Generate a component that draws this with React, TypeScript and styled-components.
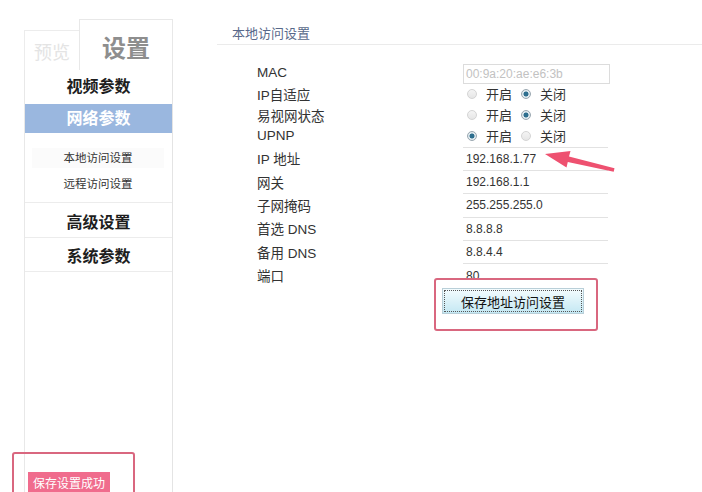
import React from "react";
import styled, { createGlobalStyle } from "styled-components";

const Global = createGlobalStyle`
  html, body { margin: 0; padding: 0; background: #fff; overflow: hidden; }
  body { font-family: "Liberation Sans", "Noto Sans CJK SC", sans-serif; color: #333; }
  * { box-sizing: border-box; }
`;

const CJK = `"Liberation Sans", "Noto Sans CJK SC", sans-serif`;

const Page = styled.div`
  position: relative;
  display: flex;
  height: 492px;
  overflow: hidden;
`;

const Sidebar = styled.aside`
  margin: 19px 0 0 24px;
  width: 149px;
  display: flex;
  flex-direction: column;
`;

const Tabs = styled.div`
  display: flex;
  align-items: flex-end;
  height: 51px;
`;

const PreviewTab = styled.div`
  width: 55px;
  height: 40px;
  border: 1px solid #ececec;
  border-bottom: none;
  border-right: none;
  display: flex;
  align-items: center;
  justify-content: center;
  font-family: ${CJK};
  font-size: 18px;
  color: #e4e4e4;
  padding-top: 1px;
`;

const SettingsTab = styled.div`
  flex: 1;
  height: 51px;
  border: 1px solid #e8e8e8;
  border-bottom: none;
  display: flex;
  align-items: center;
  justify-content: center;
  font-family: ${CJK};
  font-size: 24px;
  font-weight: 700;
  color: #8e8e8e;
  padding-top: 2px;
`;

const Menu = styled.nav`
  flex: 1;
  display: flex;
  flex-direction: column;
  border-left: 1px solid #e8e8e8;
  border-right: 1px solid #e4e4e4;
`;

const MenuItem = styled.div<{ $active?: boolean; $h: number; $pt: number; $divider?: boolean }>`
  height: ${(p) => p.$h}px;
  padding-top: ${(p) => p.$pt}px;
  text-align: center;
  font-family: ${CJK};
  font-size: 16px;
  font-weight: 700;
  line-height: 24px;
  color: ${(p) => (p.$active ? "#fff" : "#1e1e1e")};
  background: ${(p) => (p.$active ? "#9ab7df" : "transparent")};
  border-bottom: ${(p) => (p.$divider ? "1px solid #ececec" : "none")};
`;

const SubMenu = styled.div`
  display: flex;
  flex-direction: column;
  gap: 6px;
  padding: 15px 0 8px;
  border-bottom: 1px solid #ececec;
`;

const SubItem = styled.div<{ $current?: boolean }>`
  margin: 0 8px 0 7px;
  height: 20px;
  line-height: 20px;
  text-align: center;
  font-family: ${CJK};
  font-size: 11.5px;
  color: #333;
  background: ${(p) => (p.$current ? "#fbfbfb" : "transparent")};
`;

const Status = styled.div`
  margin: auto 0 -4px 3px;
  align-self: flex-start;
  height: 24px;
  padding: 3px 5px 0;
  background: #f06c8d;
  color: #fff;
  font-family: ${CJK};
  font-size: 12px;
  line-height: 18px;
`;

const Content = styled.main`
  flex: 1;
  margin-left: 44px;
  display: flex;
  flex-direction: column;
`;

const SectionTitle = styled.h2`
  margin: 0;
  padding: 24px 0 0 15px;
  height: 45px;
  line-height: 20px;
  font-family: ${CJK};
  font-weight: 400;
  font-size: 13px;
  color: #59698a;
  border-bottom: 1px solid #ebebeb;
`;

const Form = styled.div`
  margin-top: 17px;
  padding-left: 40px;
  display: flex;
  flex-direction: column;
`;

const Row = styled.div<{ $h: number }>`
  display: flex;
  align-items: center;
  height: ${(p) => p.$h}px;
`;

const Label = styled.div`
  width: 206px;
  font-family: ${CJK};
  font-size: 13.5px;
  color: #333;
`;

const MacInput = styled.div`
  width: 147px;
  height: 20px;
  margin-top: 2px;
  border: 1px solid #dcdcdc;
  padding-left: 2px;
  font-size: 12px;
  line-height: 18px;
  color: #c2c2c2;
`;

const ValueBox = styled.div`
  width: 145px;
  height: 100%;
  border-top: 1px solid #e2e2e2;
  padding-left: 3px;
  display: flex;
  align-items: center;
  font-size: 12px;
  color: #333;
`;

const RadioGroup = styled.div`
  display: flex;
  align-items: center;
  padding-left: 4px;
`;

const Radio = styled.span<{ $checked?: boolean }>`
  width: 10px;
  height: 10px;
  border-radius: 50%;
  border: 1px solid ${(p) => (p.$checked ? "#9aa7b0" : "#d4d4d4")};
  background: ${(p) =>
    p.$checked
      ? "radial-gradient(circle, #2d6e8e 0 2.2px, #dfe9ee 2.8px)"
      : "linear-gradient(#f4f4f4, #e6e6e6)"};
  margin-right: 9px;
`;

const RadioText = styled.span`
  font-family: ${CJK};
  font-size: 13px;
  color: #333;
  margin-right: 9px;
`;

const ButtonRow = styled.div`
  padding-left: 185px;
  margin-top: 1.5px;
`;

const SaveButton = styled.button`
  width: 142px;
  height: 26px;
  border: 1px solid #b9cfd8;
  background: linear-gradient(#f4fcfe, #c4e8f3);
  outline: 1px dotted #555;
  outline-offset: -3px;
  font-family: ${CJK};
  font-size: 13px;
  color: #111;
  padding: 0;
  cursor: pointer;
`;

const Frame = styled.div<{ $x: number; $y: number; $w: number; $h: number }>`
  position: absolute;
  left: ${(p) => p.$x}px;
  top: ${(p) => p.$y}px;
  width: ${(p) => p.$w}px;
  height: ${(p) => p.$h}px;
  border: 2px solid #d9677f;
  border-radius: 3px;
  pointer-events: none;
`;

const Overlay = styled.svg`
  position: absolute;
  left: 0;
  top: 0;
  width: 702px;
  height: 492px;
  pointer-events: none;
`;

function RadioPair({ on }: { on: boolean }) {
  return (
    <RadioGroup>
      <Radio $checked={on} />
      <RadioText>开启</RadioText>
      <Radio $checked={!on} />
      <RadioText>关闭</RadioText>
    </RadioGroup>
  );
}

const fields: [string, string][] = [
  ["IP 地址", "192.168.1.77"],
  ["网关", "192.168.1.1"],
  ["子网掩码", "255.255.255.0"],
  ["首选 DNS", "8.8.8.8"],
  ["备用 DNS", "8.8.4.4"],
  ["端口", "80"],
];

export default function App() {
  return (
    <>
      <Global />
      <Page>
        <Sidebar>
          <Tabs>
            <PreviewTab>预览</PreviewTab>
            <SettingsTab>设置</SettingsTab>
          </Tabs>
          <Menu>
            <MenuItem $h={34} $pt={5}>视频参数</MenuItem>
            <MenuItem $h={29} $pt={3} $active>网络参数</MenuItem>
            <SubMenu>
              <SubItem $current>本地访问设置</SubItem>
              <SubItem>远程访问设置</SubItem>
            </SubMenu>
            <MenuItem $h={35} $pt={8} $divider>高级设置</MenuItem>
            <MenuItem $h={34} $pt={7} $divider>系统参数</MenuItem>
            <Status>保存设置成功</Status>
          </Menu>
        </Sidebar>
        <Content>
          <SectionTitle>本地访问设置</SectionTitle>
          <Form>
            <Row $h={21}>
              <Label>MAC</Label>
              <MacInput>00:9a:20:ae:e6:3b</MacInput>
            </Row>
            <Row $h={21}>
              <Label>IP自适应</Label>
              <RadioPair on={false} />
            </Row>
            <Row $h={21}>
              <Label>易视网状态</Label>
              <RadioPair on={false} />
            </Row>
            <Row $h={21.5}>
              <Label>UPNP</Label>
              <RadioPair on={true} />
            </Row>
            {fields.map(([l, v]) => (
              <Row $h={23.4} key={l}>
                <Label>{l}</Label>
                <ValueBox>{v}</ValueBox>
              </Row>
            ))}
            <ButtonRow>
              <SaveButton>保存地址访问设置</SaveButton>
            </ButtonRow>
          </Form>
        </Content>
        <Overlay viewBox="0 0 702 492">
          <polygon
            points="545,154 570.5,151 569,156.5 614.5,168.3 613.7,171.7 567.8,162 566.5,167.5"
            fill="#ee5170"
          />
        </Overlay>
        <Frame $x={434} $y={278} $w={164} $h={53} />
        <Frame $x={12} $y={452} $w={123} $h={60} />
      </Page>
    </>
  );
}
